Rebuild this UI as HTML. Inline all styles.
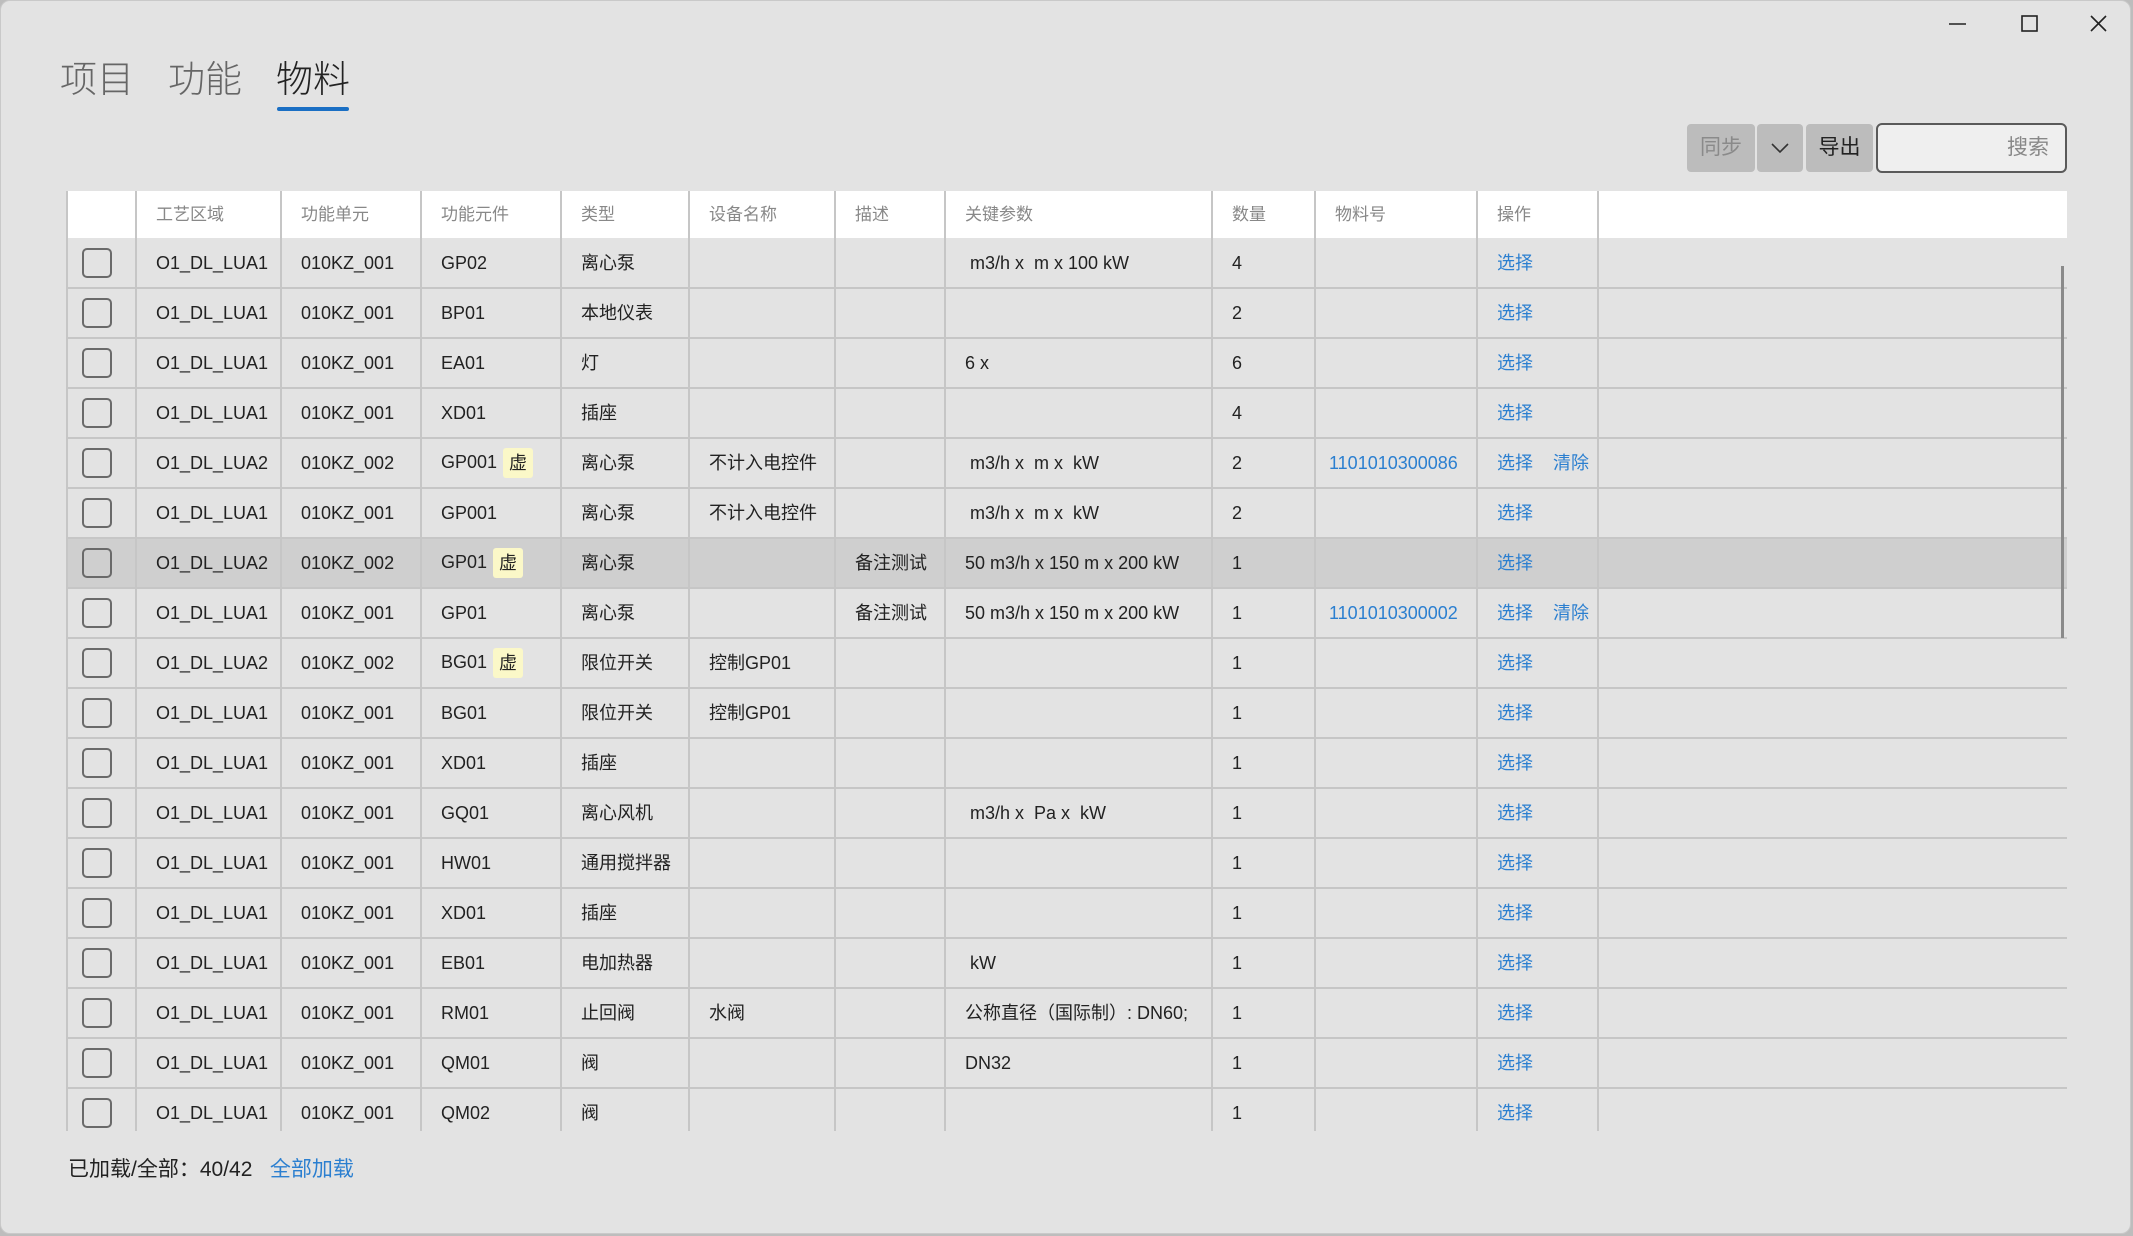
<!DOCTYPE html>
<html><head><meta charset="utf-8">
<style>
*{box-sizing:border-box;margin:0;padding:0}
html,body{width:2133px;height:1236px;overflow:hidden;background:#bdbdbd}
body{font-family:"Liberation Sans","Noto Sans CJK SC",sans-serif;color:#222}
.win{position:absolute;left:0;top:0;width:2131px;height:1234px;background:#e3e3e3;border-radius:10px;border:1px solid #c9c9c9;overflow:hidden}
.tab{position:absolute;top:48px;font-size:37px;color:#666;font-weight:300}
.ul{position:absolute;left:276px;top:106px;width:72px;height:4px;border-radius:2px;background:#1a6fc4}
.btn{position:absolute;top:123px;height:48px;background:#bcbcbc;border-radius:4px;font-size:21px;text-align:center;line-height:48px}
.search{position:absolute;left:1875px;top:122px;width:191px;height:50px;border:2px solid #5a5a5a;border-radius:6px;background:#efefef;font-size:21px;color:#888;text-align:right;padding-right:16px;line-height:46px}
.tbl{position:absolute;left:65px;top:190px;width:2001px;height:940px;overflow:hidden;border-left:2px solid #c6c6c6}
table{border-collapse:collapse;table-layout:fixed;width:1999px}
td,th{height:50px;border-bottom:2px solid #c6c6c6;border-right:2px solid #c6c6c6;padding-left:19px;font-size:18px;line-height:20px;font-weight:normal;text-align:left;white-space:nowrap;overflow:hidden;vertical-align:middle}
th{height:47px;background:#fff;color:#888;font-size:17px;border-bottom:none}
td:last-child,th:last-child{border-right:none}
tr.sel td{background:#cfcfcf}
.cb{display:inline-block;width:30px;height:30px;border:2px solid #6a6a6a;border-radius:5px;vertical-align:middle;margin-left:-5px}
.a{color:#2b7fd0}
.v{display:inline-block;width:30px;height:30px;background:#fbf8c8;border-radius:3px;text-align:center;line-height:30px;font-size:18px;margin-left:6px;vertical-align:middle}
.sb{position:absolute;left:2060px;top:265px;width:3px;height:372px;background:#8a8a8a}
.foot{position:absolute;left:67px;top:1152px;font-size:21px}
</style></head><body>
<div class="win">
<svg style="position:absolute;left:1947px;top:12px" width="160" height="24" viewBox="0 0 160 24">
<line x1="1" y1="11" x2="18" y2="11" stroke="#222" stroke-width="1.6"/>
<rect x="74" y="3" width="15" height="15" fill="none" stroke="#222" stroke-width="1.6"/>
<path d="M143 3 L158 18 M158 3 L143 18" stroke="#222" stroke-width="1.6"/>
</svg>
<div class="tab" style="left:59px">项目</div>
<div class="tab" style="left:167px">功能</div>
<div class="tab" style="left:275px;color:#222">物料</div>
<div class="ul"></div>
<div class="btn" style="left:1686px;width:68px;color:#8a8a8a">同步</div>
<div class="btn" style="left:1756px;width:46px"><svg width="20" height="12" viewBox="0 0 20 12" style="vertical-align:middle"><path d="M2 2 L10 10 L18 2" fill="none" stroke="#333" stroke-width="1.6"/></svg></div>
<div class="btn" style="left:1805px;width:67px">导出</div>
<div class="search">搜索</div>
<div class="tbl"><table>
<colgroup><col style="width:68px"><col style="width:145px"><col style="width:140px"><col style="width:140px"><col style="width:128px"><col style="width:146px"><col style="width:110px"><col style="width:267px"><col style="width:103px"><col style="width:162px"><col style="width:121px"><col style="width:469px"></colgroup>
<tr><th></th><th>工艺区域</th><th>功能单元</th><th>功能元件</th><th>类型</th><th>设备名称</th><th>描述</th><th>关键参数</th><th>数量</th><th>物料号</th><th>操作</th><th></th></tr>
<tr><td><span class="cb"></span></td><td>O1_DL_LUA1</td><td>010KZ_001</td><td>GP02</td><td>离心泵</td><td></td><td></td><td>&nbsp;m3/h x &nbsp;m x 100 kW</td><td>4</td><td></td><td class="a">选择</td><td></td></tr>
<tr><td><span class="cb"></span></td><td>O1_DL_LUA1</td><td>010KZ_001</td><td>BP01</td><td>本地仪表</td><td></td><td></td><td></td><td>2</td><td></td><td class="a">选择</td><td></td></tr>
<tr><td><span class="cb"></span></td><td>O1_DL_LUA1</td><td>010KZ_001</td><td>EA01</td><td>灯</td><td></td><td></td><td>6 x</td><td>6</td><td></td><td class="a">选择</td><td></td></tr>
<tr><td><span class="cb"></span></td><td>O1_DL_LUA1</td><td>010KZ_001</td><td>XD01</td><td>插座</td><td></td><td></td><td></td><td>4</td><td></td><td class="a">选择</td><td></td></tr>
<tr><td><span class="cb"></span></td><td>O1_DL_LUA2</td><td>010KZ_002</td><td>GP001<span class="v">虚</span></td><td>离心泵</td><td>不计入电控件</td><td></td><td>&nbsp;m3/h x &nbsp;m x &nbsp;kW</td><td>2</td><td class="a" style="padding-left:13px">1101010300086</td><td class="a">选择 &nbsp;&nbsp;&nbsp;清除</td><td></td></tr>
<tr><td><span class="cb"></span></td><td>O1_DL_LUA1</td><td>010KZ_001</td><td>GP001</td><td>离心泵</td><td>不计入电控件</td><td></td><td>&nbsp;m3/h x &nbsp;m x &nbsp;kW</td><td>2</td><td></td><td class="a">选择</td><td></td></tr>
<tr class="sel"><td><span class="cb"></span></td><td>O1_DL_LUA2</td><td>010KZ_002</td><td>GP01<span class="v">虚</span></td><td>离心泵</td><td></td><td>备注测试</td><td>50 m3/h x 150 m x 200 kW</td><td>1</td><td></td><td class="a">选择</td><td></td></tr>
<tr><td><span class="cb"></span></td><td>O1_DL_LUA1</td><td>010KZ_001</td><td>GP01</td><td>离心泵</td><td></td><td>备注测试</td><td>50 m3/h x 150 m x 200 kW</td><td>1</td><td class="a" style="padding-left:13px">1101010300002</td><td class="a">选择 &nbsp;&nbsp;&nbsp;清除</td><td></td></tr>
<tr><td><span class="cb"></span></td><td>O1_DL_LUA2</td><td>010KZ_002</td><td>BG01<span class="v">虚</span></td><td>限位开关</td><td>控制GP01</td><td></td><td></td><td>1</td><td></td><td class="a">选择</td><td></td></tr>
<tr><td><span class="cb"></span></td><td>O1_DL_LUA1</td><td>010KZ_001</td><td>BG01</td><td>限位开关</td><td>控制GP01</td><td></td><td></td><td>1</td><td></td><td class="a">选择</td><td></td></tr>
<tr><td><span class="cb"></span></td><td>O1_DL_LUA1</td><td>010KZ_001</td><td>XD01</td><td>插座</td><td></td><td></td><td></td><td>1</td><td></td><td class="a">选择</td><td></td></tr>
<tr><td><span class="cb"></span></td><td>O1_DL_LUA1</td><td>010KZ_001</td><td>GQ01</td><td>离心风机</td><td></td><td></td><td>&nbsp;m3/h x &nbsp;Pa x &nbsp;kW</td><td>1</td><td></td><td class="a">选择</td><td></td></tr>
<tr><td><span class="cb"></span></td><td>O1_DL_LUA1</td><td>010KZ_001</td><td>HW01</td><td>通用搅拌器</td><td></td><td></td><td></td><td>1</td><td></td><td class="a">选择</td><td></td></tr>
<tr><td><span class="cb"></span></td><td>O1_DL_LUA1</td><td>010KZ_001</td><td>XD01</td><td>插座</td><td></td><td></td><td></td><td>1</td><td></td><td class="a">选择</td><td></td></tr>
<tr><td><span class="cb"></span></td><td>O1_DL_LUA1</td><td>010KZ_001</td><td>EB01</td><td>电加热器</td><td></td><td></td><td>&nbsp;kW</td><td>1</td><td></td><td class="a">选择</td><td></td></tr>
<tr><td><span class="cb"></span></td><td>O1_DL_LUA1</td><td>010KZ_001</td><td>RM01</td><td>止回阀</td><td>水阀</td><td></td><td>公称直径（国际制）: DN60;</td><td>1</td><td></td><td class="a">选择</td><td></td></tr>
<tr><td><span class="cb"></span></td><td>O1_DL_LUA1</td><td>010KZ_001</td><td>QM01</td><td>阀</td><td></td><td></td><td>DN32</td><td>1</td><td></td><td class="a">选择</td><td></td></tr>
<tr><td><span class="cb"></span></td><td>O1_DL_LUA1</td><td>010KZ_001</td><td>QM02</td><td>阀</td><td></td><td></td><td></td><td>1</td><td></td><td class="a">选择</td><td></td></tr>
</table></div>
<div class="sb"></div>
<div class="foot">已加载/全部：40/42 &nbsp;&nbsp;<span class="a">全部加载</span></div>
</div>
</body></html>
